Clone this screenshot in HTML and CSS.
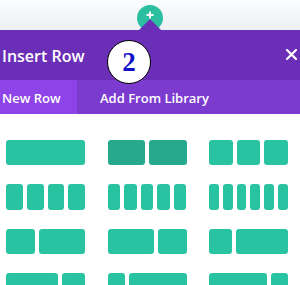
FILE: index.html
```html
<!DOCTYPE html>
<html>
<head>
<meta charset="utf-8">
<link rel="stylesheet" href="styles.css">
</head>
<body>
<div class="topbar">
  <div class="add-btn">
    <svg width="8" height="8" viewBox="0 0 8 8"><path d="M4 0.5V7.5M0.5 4H7.5" stroke="#fff" stroke-width="1.8"/></svg>
  </div>
  <div class="pointer"></div>
</div>
<div class="modal">
  <div class="header">
    <span class="title">Insert Row</span>
    <svg class="close" width="11" height="11" viewBox="0 0 11 11"><path d="M1 1L10 10M10 1L1 10" stroke="#fff" stroke-width="2.2" stroke-linecap="round"/></svg>
    <div class="step"><span>2</span></div>
  </div>
  <div class="tabs">
    <div class="tab active">New Row</div>
    <div class="tab">Add From Library</div>
  </div>
  <div class="layouts">
    <div class="layout"><i style="flex:1"></i></div>
    <div class="layout hover"><i style="flex:1"></i><i style="flex:1"></i></div>
    <div class="layout"><i style="flex:1"></i><i style="flex:1"></i><i style="flex:1"></i></div>

    <div class="layout tall"><i style="flex:1"></i><i style="flex:1"></i><i style="flex:1"></i><i style="flex:1"></i></div>
    <div class="layout tall"><i style="flex:1"></i><i style="flex:1"></i><i style="flex:1"></i><i style="flex:1"></i><i style="flex:1"></i></div>
    <div class="layout tall"><i style="flex:1"></i><i style="flex:1"></i><i style="flex:1"></i><i style="flex:1"></i><i style="flex:1"></i><i style="flex:1"></i></div>

    <div class="layout"><i style="flex:29"></i><i style="flex:46"></i></div>
    <div class="layout"><i style="flex:46"></i><i style="flex:29"></i></div>
    <div class="layout"><i style="flex:23"></i><i style="flex:51"></i></div>

    <div class="layout"><i style="flex:52"></i><i style="flex:23"></i></div>
    <div class="layout"><i style="flex:17"></i><i style="flex:58"></i></div>
    <div class="layout"><i style="flex:58"></i><i style="flex:17"></i></div>
  </div>
</div>
</body>
</html>
```
FILE: styles.css
```css
html, body {
  margin: 0;
  padding: 0;
  width: 300px;
  height: 285px;
  overflow: hidden;
  background: #fff;
  font-family: "Open Sans", "Liberation Sans", sans-serif;
}
.topbar {
  position: relative;
  height: 30px;
  background: linear-gradient(#fbfcfd, #edf0f4);
}
.add-btn {
  position: absolute;
  left: 137px;
  top: 5px;
  width: 26px;
  height: 26px;
  border-radius: 50%;
  background: #2bbf9f;
  display: flex;
  justify-content: center;
  padding-top: 6px;
  box-sizing: border-box;
}
.add-btn svg { display: block; }
.pointer {
  position: absolute;
  left: 139px;
  top: 19px;
  width: 0;
  height: 0;
  border-left: 11px solid transparent;
  border-right: 11px solid transparent;
  border-bottom: 11px solid #6b2eb7;
}
.header {
  position: relative;
  height: 50px;
  background: #6b2eb7;
  display: flex;
  align-items: center;
  justify-content: space-between;
  padding: 0 3px 0 2px;
  box-sizing: border-box;
}
.title {
  color: #fff;
  font-size: 16px;
  font-weight: 600;
  margin-top: 2px;
}
.close { display: block; margin-top: -1px; }
.step {
  position: absolute;
  left: 107px;
  top: 10px;
  width: 44px;
  height: 44px;
  box-sizing: border-box;
  border: 1.5px solid #000;
  border-radius: 50%;
  background: #fff;
  display: flex;
  align-items: center;
  justify-content: center;
}
.step span {
  font-family: "Liberation Serif", serif;
  font-weight: bold;
  font-size: 27px;
  color: #1010c8;
  line-height: 1;
  margin-top: 1px;
}
.tabs {
  height: 34px;
  background: #7b3bcf;
  display: flex;
}
.tab {
  color: #fff;
  font-size: 13px;
  font-weight: 600;
  display: flex;
  align-items: center;
  padding-left: 23px;
  padding-top: 1px;
}
.tab.active {
  width: 77px;
  box-sizing: border-box;
  padding-left: 2px;
  background: #8d43e8;
}
.layouts {
  display: grid;
  grid-template-columns: 79px 79px 79px;
  column-gap: 22.5px;
  row-gap: 19px;
  padding: 26px 0 0 6px;
}
.layout {
  display: flex;
  gap: 4px;
  height: 25px;
}
.layout.tall { height: 26px; }
.layout i {
  display: block;
  background: #2ac3a2;
  border-radius: 3px;
}
.layout.hover i { background: #26a98d; }
```
